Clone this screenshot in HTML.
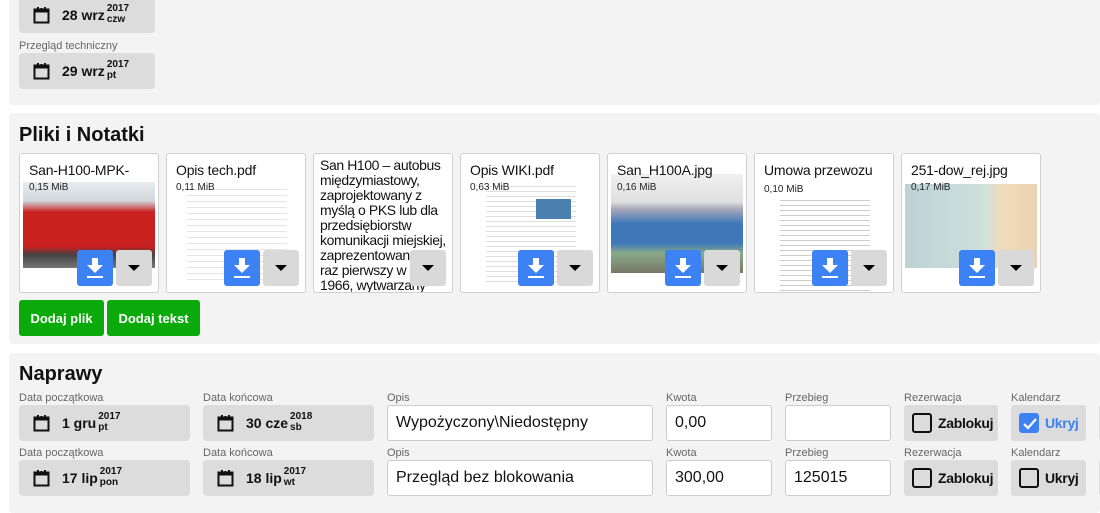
<!DOCTYPE html>
<html><head><meta charset="utf-8"><style>
*{box-sizing:border-box;margin:0;padding:0}
body{width:1100px;height:501px;background:#fff;font-family:"Liberation Sans",sans-serif;position:relative;overflow:hidden;color:#111}
.a{position:absolute}
.panel{position:absolute;left:9px;width:1091px;background:#f3f3f3;border-radius:4px}
.date{position:absolute;background:#dcdcdc;border-radius:4px;height:36px;display:flex;align-items:center;font-weight:bold;font-size:14px}
.date svg{margin-left:14px;margin-right:12px}
.sup{display:inline-flex;flex-direction:column;font-size:10px;line-height:11px;margin-left:2px;margin-top:-2px}
.lbl{position:absolute;font-size:11px;color:#666}
.card{position:absolute;top:153px;width:140px;height:140px;background:#fff;border:1px solid #d0d0d0;border-radius:3px;overflow:hidden}
.card .t{position:absolute;left:9px;top:8px;font-size:14px;white-space:nowrap;letter-spacing:-0.2px}
.card .s{position:absolute;left:9px;top:28px;font-size:10px;color:#222}
.dl{position:absolute;top:96px;left:57px;width:36px;height:36px;background:#3d82f5;border-radius:3px}
.dd{position:absolute;top:96px;left:96px;width:36px;height:36px;background:#d9d9d9;border-radius:3px}
.dd:after{content:"";position:absolute;left:12px;top:15px;border-left:6px solid transparent;border-right:6px solid transparent;border-top:6px solid #000}
.btn{position:absolute;top:300px;height:36px;background:#0aaa0a;color:#fff;font-weight:bold;font-size:13px;border-radius:3px;display:flex;align-items:center;justify-content:center}
.inp{position:absolute;height:36px;background:#fff;border:1px solid #ccc;border-radius:3px;font-size:16px;padding-left:8px;display:flex;align-items:center}
.chk{position:absolute;height:36px;background:#dcdcdc;border-radius:3px;display:flex;align-items:center;font-weight:bold;font-size:14px;letter-spacing:-0.3px}
.box{width:20px;height:20px;border:2px solid #111;border-radius:3px;margin-left:8px;margin-right:6px}
</style></head><body>
<div class="panel" style="top:-5px;height:110px"></div>
<div class="panel" style="top:113px;height:231px"></div>
<div class="panel" style="top:353px;height:160px"></div>

<svg width="0" height="0" style="position:absolute"><defs><g id="cal"><rect x="1.5" y="3.5" width="14" height="13" fill="none" stroke="#111" stroke-width="2"/><rect x="1.5" y="3.5" width="14" height="3" fill="#111"/><rect x="4" y="1" width="2" height="3" fill="#111"/><rect x="11" y="1" width="2" height="3" fill="#111"/><rect x="7.5" y="2" width="2" height="2" fill="#111"/></g></defs></svg>

<div class="date" style="left:19px;top:-3px;width:136px"><svg width="17" height="18"><use href="#cal"/></svg><span style="font-size:14px">28 wrz</span><span class="sup"><span>2017</span><span>czw</span></span></div>
<div class="lbl" style="left:19px;top:40px">Przegląd techniczny</div>
<div class="date" style="left:19px;top:53px;width:136px"><svg width="17" height="18"><use href="#cal"/></svg><span>29 wrz</span><span class="sup"><span>2017</span><span>pt</span></span></div>

<div class="a" style="left:19px;top:124px;font-size:20px;font-weight:bold">Pliki i Notatki</div>

<div class="card" style="left:19px"><div class="a" style="left:3px;top:28px;width:132px;height:86px;background:linear-gradient(#e8ecef 0,#d0d8dc 22%,#c92020 35%,#c92020 75%,#444 85%,#777 100%)"></div><div class="t">San-H100-MPK-</div><div class="s">0,15 MiB</div><div class="dl"></div><div class="dd"></div></div>
<div class="card" style="left:166px"><div class="a" style="left:20px;top:30px;width:100px;height:100px;background:repeating-linear-gradient(#fff 0,#fff 5px,#e4e4e4 5px,#e4e4e4 6px)"></div><div class="t">Opis tech.pdf</div><div class="s">0,11 MiB</div><div class="dl"></div><div class="dd"></div></div>
<div class="card" style="left:313px"><div class="a" style="left:6px;top:4px;width:134px;font-size:14px;line-height:15px;letter-spacing:-0.4px">San H100 – autobus międzymiastowy, zaprojektowany z myślą o PKS lub dla przedsiębiorstw komunikacji miejskiej, zaprezentowany po raz pierwszy w roku 1966, wytwarzany</div><div class="dd"></div></div>
<div class="card" style="left:460px"><div class="a" style="left:25px;top:28px;width:90px;height:100px;background:repeating-linear-gradient(#fff 0,#fff 4px,#ddd 4px,#ddd 5px)"></div><div class="a" style="left:75px;top:45px;width:35px;height:20px;background:#4a7fb0"></div><div class="t">Opis WIKI.pdf</div><div class="s">0,63 MiB</div><div class="dl"></div><div class="dd"></div></div>
<div class="card" style="left:607px"><div class="a" style="left:3px;top:20px;width:132px;height:99px;background:linear-gradient(#f0f0f0 0,#e0e0e0 28%,#aab 35%,#3f78b8 50%,#3f78b8 70%,#8a8 80%,#776 100%)"></div><div class="t">San_H100A.jpg</div><div class="s">0,16 MiB</div><div class="dl"></div><div class="dd"></div></div>
<div class="card" style="left:754px"><div class="a" style="left:25px;top:42px;width:90px;height:95px;background:repeating-linear-gradient(#fff 0,#fff 4px,#ccc 4px,#ccc 5px)"></div><div class="t">Umowa przewozu</div><div class="s" style="top:30px">0,10 MiB</div><div class="dl"></div><div class="dd"></div></div>
<div class="card" style="left:901px"><div class="a" style="left:3px;top:30px;width:132px;height:84px;background:linear-gradient(90deg,#bcd2d6 0,#cfe0dc 60%,#f0dcb8 75%,#e8d4b4 100%)"></div><div class="t">251-dow_rej.jpg</div><div class="s">0,17 MiB</div><div class="dl"></div><div class="dd"></div></div>

<svg class="a" style="left:0;top:0" width="1100" height="300">
<g fill="#fff">
<g id="arr"><rect x="92" y="258" width="6" height="8"/><polygon points="87,265 103,265 95,273"/><rect x="87" y="276" width="16" height="2"/></g>
<use href="#arr" x="147"/><use href="#arr" x="441"/><use href="#arr" x="588"/><use href="#arr" x="735"/><use href="#arr" x="882"/>
</g></svg>

<div class="btn" style="left:19px;width:85px">Dodaj plik</div>
<div class="btn" style="left:107px;width:93px">Dodaj tekst</div>

<div class="a" style="left:19px;top:363px;font-size:20px;font-weight:bold">Naprawy</div>

<div class="lbl" style="left:19px;top:392px">Data początkowa</div>
<div class="lbl" style="left:203px;top:392px">Data końcowa</div>
<div class="lbl" style="left:387px;top:392px">Opis</div>
<div class="lbl" style="left:666px;top:392px">Kwota</div>
<div class="lbl" style="left:785px;top:392px">Przebieg</div>
<div class="lbl" style="left:904px;top:392px">Rezerwacja</div>
<div class="lbl" style="left:1011px;top:392px">Kalendarz</div>
<div class="date" style="left:19px;top:405px;width:171px"><svg width="17" height="18"><use href="#cal"/></svg><span>1 gru</span><span class="sup"><span>2017</span><span>pt</span></span></div>
<div class="date" style="left:203px;top:405px;width:171px"><svg width="17" height="18"><use href="#cal"/></svg><span>30 cze</span><span class="sup"><span>2018</span><span>sb</span></span></div>
<div class="inp" style="left:387px;top:405px;width:266px">Wypożyczony\Niedostępny</div>
<div class="inp" style="left:666px;top:405px;width:106px">0,00</div>
<div class="inp" style="left:785px;top:405px;width:106px"></div>
<div class="chk" style="left:904px;top:405px;width:94px"><div class="box"></div>Zablokuj</div>
<div class="chk" style="left:1011px;top:405px;width:75px;color:#3d82f5"><div class="box" style="background:#3d82f5;border-color:#3d82f5;position:relative"><svg class="a" style="left:1px;top:2px" width="16" height="14"><path d="M2 7 L6 11 L14 2" stroke="#fff" stroke-width="2.2" fill="none"/></svg></div>Ukryj</div>
<div class="chk" style="left:1099px;top:405px;width:10px"></div>

<div class="lbl" style="left:19px;top:447px">Data początkowa</div>
<div class="lbl" style="left:203px;top:447px">Data końcowa</div>
<div class="lbl" style="left:387px;top:447px">Opis</div>
<div class="lbl" style="left:666px;top:447px">Kwota</div>
<div class="lbl" style="left:785px;top:447px">Przebieg</div>
<div class="lbl" style="left:904px;top:447px">Rezerwacja</div>
<div class="lbl" style="left:1011px;top:447px">Kalendarz</div>
<div class="date" style="left:19px;top:460px;width:171px"><svg width="17" height="18"><use href="#cal"/></svg><span>17 lip</span><span class="sup"><span>2017</span><span>pon</span></span></div>
<div class="date" style="left:203px;top:460px;width:171px"><svg width="17" height="18"><use href="#cal"/></svg><span>18 lip</span><span class="sup"><span>2017</span><span>wt</span></span></div>
<div class="inp" style="left:387px;top:460px;width:266px">Przegląd bez blokowania</div>
<div class="inp" style="left:666px;top:460px;width:106px">300,00</div>
<div class="inp" style="left:785px;top:460px;width:106px">125015</div>
<div class="chk" style="left:904px;top:460px;width:94px"><div class="box"></div>Zablokuj</div>
<div class="chk" style="left:1011px;top:460px;width:75px"><div class="box"></div>Ukryj</div>
<div class="chk" style="left:1099px;top:460px;width:10px"></div>
</body></html>
